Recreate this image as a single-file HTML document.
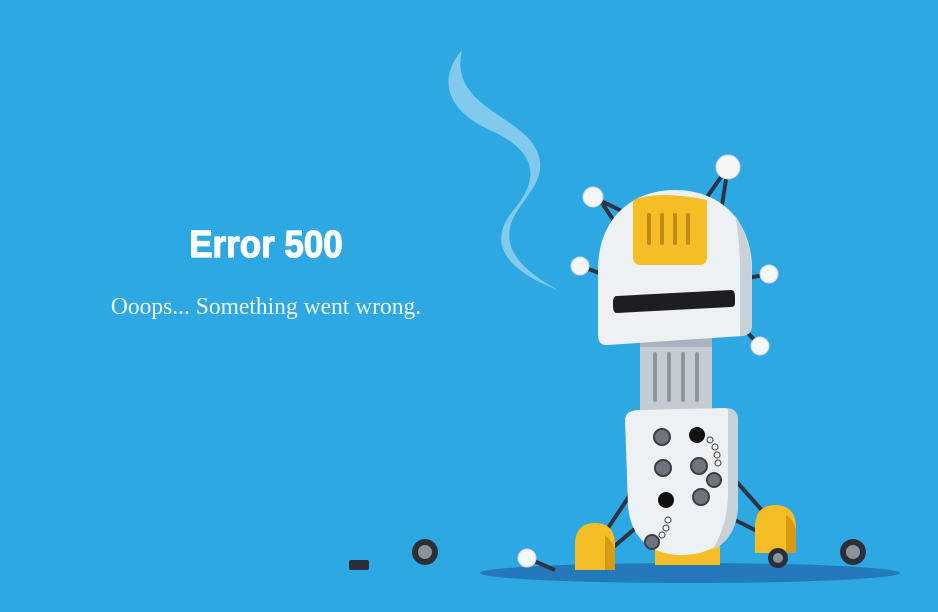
<!DOCTYPE html>
<html><head><meta charset="utf-8"><style>
html,body{margin:0;padding:0}
body{width:938px;height:612px;background:#2ea8e3;position:relative;overflow:hidden;font-family:"Liberation Sans",sans-serif}
.t1{position:absolute;left:116px;width:300px;top:224px;text-align:center;color:#fff;font-weight:bold;font-size:38px;transform:scaleX(0.92);-webkit-text-stroke:1.2px #fff}
.t2{position:absolute;left:66px;width:400px;top:294px;text-align:center;color:#eef7fc;font-family:"Liberation Serif",serif;font-size:24px;transform:scaleX(0.98)}
svg{position:absolute;left:0;top:0}
</style></head><body>
<div class="t1">Error 500</div>
<div class="t2">Ooops... Something went wrong.</div>
<svg width="938" height="612" viewBox="0 0 938 612">
<ellipse cx="690" cy="573" rx="210" ry="10" fill="#2479bb"/>
<path d="M462 50 C438 78 445 110 490 130 C545 155 535 185 512 212 C490 240 500 268 558 290 C525 272 505 252 510 228 C515 200 560 178 530 140 C505 112 450 100 462 50Z" fill="#8fd0f0" opacity="0.85"/>
<g stroke="#2b3446" stroke-width="4">
<line x1="593" y1="197" x2="630" y2="215"/><line x1="600" y1="200" x2="620" y2="230"/>
<line x1="728" y1="167" x2="705" y2="200"/><line x1="728" y1="167" x2="722" y2="205"/>
<line x1="580" y1="266" x2="605" y2="275"/><line x1="769" y1="274" x2="748" y2="278"/>
<line x1="760" y1="346" x2="745" y2="330"/>
<line x1="600" y1="540" x2="640" y2="480"/><line x1="610" y1="550" x2="645" y2="520"/>
<line x1="775" y1="525" x2="735" y2="480"/><line x1="765" y1="535" x2="735" y2="520"/>
<line x1="527" y1="558" x2="555" y2="570"/>
</g>
<g fill="#f4f6f8" stroke="#cfd6dd" stroke-width="1">
<circle cx="593" cy="197" r="10"/><circle cx="728" cy="167" r="12"/><circle cx="580" cy="266" r="9"/><circle cx="769" cy="274" r="9"/><circle cx="760" cy="346" r="9"/><circle cx="527" cy="558" r="9"/>
</g>
<rect x="640" y="335" width="72" height="80" fill="#c4cbd3"/>
<rect x="640" y="335" width="72" height="12" fill="#aab3bd"/>
<g fill="#8d97a2"><rect x="653" y="352" width="4" height="50" rx="2"/><rect x="667" y="352" width="4" height="50" rx="2"/><rect x="681" y="352" width="4" height="50" rx="2"/><rect x="695" y="352" width="4" height="50" rx="2"/></g>
<path d="M598 335 L598 270 C598 220 630 190 675 190 C720 190 752 220 752 270 L752 325 Q752 335 742 336 L608 345 Q598 346 598 335Z" fill="#eef1f4"/>
<path d="M735 215 C748 235 752 255 752 280 L752 325 Q752 335 742 336 L740 336 L740 270 C740 250 738 230 735 215Z" fill="#c8d0d8"/>
<path d="M633 200 Q660 190 707 200 L707 257 Q707 265 699 265 L641 265 Q633 265 633 257Z" fill="#f5bd26"/>
<g fill="#c08b12"><rect x="647" y="213" width="4" height="32" rx="2"/><rect x="660" y="213" width="4" height="32" rx="2"/><rect x="673" y="213" width="4" height="32" rx="2"/><rect x="686" y="213" width="4" height="32" rx="2"/></g>
<path d="M617 296 L731 290 Q735 290 735 297 L735 303 Q735 307 731 307 L617 313 Q613 313 613 306 L613 302 Q613 296 617 296Z" fill="#1e1e22"/>
<rect x="655" y="530" width="65" height="35" fill="#f5bd26"/>
<path d="M625 420 Q625 410 640 410 L725 408 Q738 408 738 420 L738 505 C738 535 715 555 682 555 C648 555 630 535 628 505Z" fill="#eef1f4"/>
<path d="M725 408 Q738 408 738 420 L738 505 C738 530 725 545 712 550 C725 530 728 510 728 490 L728 410Z" fill="#c8d0d8"/>
<g fill="#6f757c" stroke="#3a3f45" stroke-width="2">
<circle cx="662" cy="437" r="8"/><circle cx="663" cy="468" r="8"/><circle cx="699" cy="466" r="8"/><circle cx="701" cy="497" r="8"/><circle cx="714" cy="480" r="7"/><circle cx="652" cy="542" r="7"/>
</g>
<circle cx="697" cy="435" r="8" fill="#111"/><circle cx="666" cy="500" r="8" fill="#111"/>
<g fill="none" stroke="#555" stroke-width="1.2"><circle cx="710" cy="440" r="3"/><circle cx="715" cy="447" r="3"/><circle cx="717" cy="455" r="3"/><circle cx="718" cy="463" r="3"/><circle cx="668" cy="520" r="3"/><circle cx="666" cy="528" r="3"/><circle cx="662" cy="535" r="3"/></g>
<path d="M575 570 L575 545 Q575 523 595 523 Q615 523 615 545 L615 570Z" fill="#f5bd26"/>
<path d="M755 553 L755 528 Q755 505 775 505 Q796 505 796 528 L796 553Z" fill="#f5bd26"/>
<path d="M605 570 L605 535 Q612 540 615 550 L615 570Z" fill="#d89a10"/>
<path d="M786 553 L786 515 Q794 520 796 530 L796 553Z" fill="#d89a10"/>
<g><circle cx="425" cy="552" r="13" fill="#2a2f3a"/><circle cx="425" cy="552" r="7" fill="#8c939b"/>
<circle cx="853" cy="552" r="13" fill="#2a2f3a"/><circle cx="853" cy="552" r="7" fill="#8c939b"/>
<circle cx="778" cy="558" r="10" fill="#2a2f3a"/><circle cx="778" cy="558" r="5" fill="#8c939b"/></g>
<rect x="349" y="560" width="20" height="10" rx="2" fill="#2a2f3a"/>
</svg>
</body></html>
